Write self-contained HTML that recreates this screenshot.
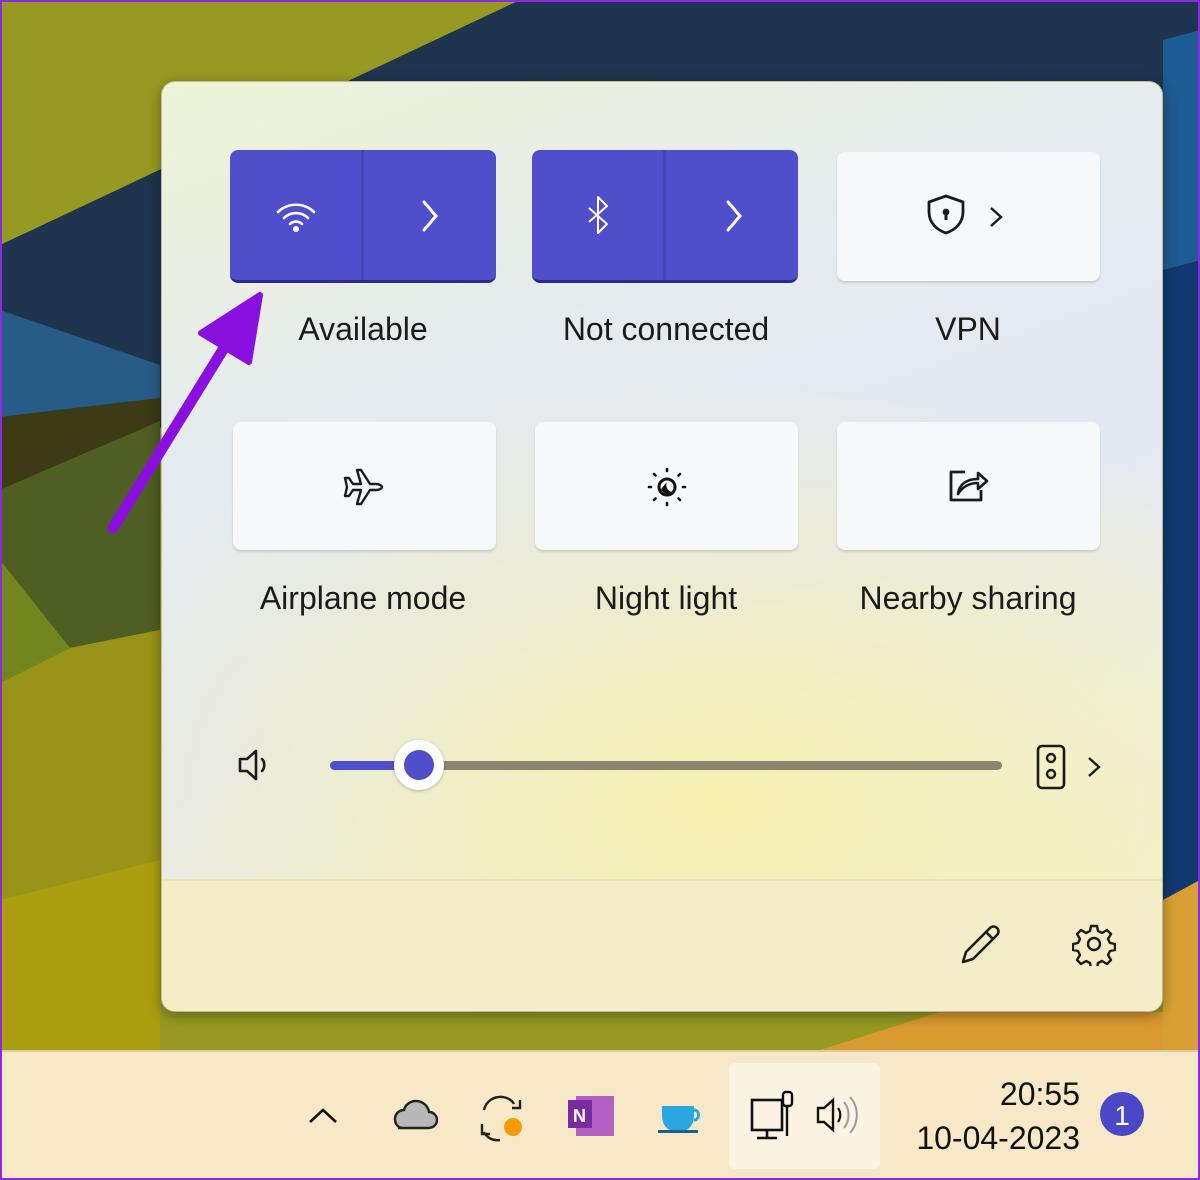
<!DOCTYPE html>
<html><head><meta charset="utf-8"><style>
*{margin:0;padding:0;box-sizing:border-box}
body{width:1200px;height:1180px;position:relative;overflow:hidden;font-family:"Liberation Sans",sans-serif;background:#979a22}
.abs{position:absolute}
.panel{left:161px;top:81px;width:1002px;height:931px;border-radius:14px;overflow:hidden;
background:radial-gradient(ellipse 700px 420px at 560px 720px,#f6f0b0 0%,rgba(246,240,176,0) 100%),linear-gradient(160deg,#edf3d6 0%,#e5ebee 30%,#e4e8f2 55%,#eef0e4 75%,#f6efc8 100%);
box-shadow:0 4px 14px rgba(0,0,0,.35);border:1px solid rgba(120,110,60,.4)}
.footer{left:0;top:797px;width:1002px;height:134px;background:#f5ecc8;border-top:2px solid #ece2bc}
.tile{border-radius:8px}
.blue{background:#4f4fcc;border-bottom:3px solid #2c2c8a}
.white{background:#f7f8fa;box-shadow:0 2px 2px rgba(0,0,0,.13)}
.lbl{font-size:32px;color:#1b1b1b;text-align:center;width:320px}
.sep{width:3px;background:#4545b8;top:0;bottom:0}
</style></head><body>
<svg class="abs" style="left:0;top:0" width="1200" height="1180">
<polygon points="0,245 520,0 1200,0 1200,90 0,480" fill="#1f344f"/>
<polygon points="0,310 160,365 160,398 0,417" fill="#275c86"/>
<polygon points="0,417 160,398 160,421 0,490" fill="#3c3b15"/>
<polygon points="0,490 160,421 160,630 70,648 0,683" fill="#4f5e22"/>
<polygon points="0,560 70,648 0,683" fill="#72851f"/>
<polygon points="0,683 70,648 160,630 160,1050 0,1050" fill="#999319"/>
<polygon points="0,900 160,860 160,1050 0,1050" fill="#ab9d10"/>
<polygon points="1163,40 1200,30 1200,260 1163,270" fill="#1f5b94"/>
<polygon points="1163,270 1200,260 1200,880 1163,900" fill="#123a70"/>
<polygon points="1163,900 1200,880 1200,1050 1163,1050" fill="#d8a034"/>
<polygon points="820,1050 940,1012 1163,1012 1163,1050" fill="#d99a30"/>
</svg>
<div class="abs panel">
<div class="abs footer"></div>
<div class="abs tile blue" style="left:68px;top:68px;width:266px;height:133px">
<div class="abs sep" style="left:131px"></div>
<svg class="abs" style="left:44px;top:48px" width="44" height="36" viewBox="0 0 44 36"><g fill="none" stroke="#fff" stroke-width="2.6" stroke-linecap="round"><path d="M4 14a26 26 0 0 1 36 0"/><path d="M10 20a17 17 0 0 1 24 0"/><path d="M16 26a8.5 8.5 0 0 1 12 0"/></g><circle cx="22" cy="31" r="3" fill="#fff"/></svg>
<svg class="abs" style="left:188px;top:48px" width="24" height="36"><path d="M6 4l12 14-12 14" fill="none" stroke="#fff" stroke-width="3" stroke-linecap="round"/></svg>
</div>
<div class="abs lbl" style="left:41px;top:229px">Available</div>
<div class="abs tile blue" style="left:370px;top:68px;width:266px;height:133px">
<div class="abs sep" style="left:131px"></div>
<svg class="abs" style="left:52px;top:44px" width="28" height="44"><path d="M5 14l18 16-9 9V3l9 9-18 16" fill="none" stroke="#fff" stroke-width="2" stroke-linejoin="round"/></svg>
<svg class="abs" style="left:190px;top:48px" width="24" height="36"><path d="M6 4l12 14-12 14" fill="none" stroke="#fff" stroke-width="3" stroke-linecap="round"/></svg>
</div>
<div class="abs lbl" style="left:344px;top:229px">Not connected</div>
<div class="abs tile white" style="left:675px;top:70px;width:263px;height:129px">
<svg class="abs" style="left:86px;top:40px" width="46" height="46"><path d="M23 4l17 6v10c0 11-8 18-17 21-9-3-17-10-17-21V10z" fill="none" stroke="#1b1b1b" stroke-width="2.8" stroke-linejoin="round"/><circle cx="23" cy="20" r="3.4" fill="#1b1b1b"/><rect x="21.5" y="20" width="3" height="8" fill="#1b1b1b"/></svg>
<svg class="abs" style="left:150px;top:52px" width="20" height="26"><path d="M4 4l10 9-10 9" fill="none" stroke="#1b1b1b" stroke-width="2.4"/></svg>
</div>
<div class="abs lbl" style="left:646px;top:229px">VPN</div>
<div class="abs tile white" style="left:71px;top:340px;width:263px;height:128px">
<svg class="abs" style="left:108px;top:42px" width="46" height="46" viewBox="0 0 46 46"><path d="M4 14h4l4 6h8l-4-14h4l9 14h6c4 0 6 2 6 3s-2 3-6 3h-6l-9 14h-4l4-14h-8l-4 6H4l2-9z" fill="none" stroke="#1b1b1b" stroke-width="2.4" stroke-linejoin="round"/></svg>
</div>
<div class="abs lbl" style="left:41px;top:498px">Airplane mode</div>
<div class="abs tile white" style="left:373px;top:340px;width:263px;height:128px">
<svg class="abs" style="left:110px;top:43px" width="44" height="44" viewBox="0 0 44 44"><circle cx="22" cy="22" r="8" fill="none" stroke="#111" stroke-width="3"/><path d="M16 24a7 7 0 0 0 11 3 7 7 0 0 1-5-10z" fill="#111"/><g stroke="#111" stroke-width="2.6" stroke-linecap="round"><path d="M22 4v2M22 38v2M4 22h2M38 22h2M9 9l1.5 1.5M33.5 33.5L35 35M9 35l1.5-1.5M33.5 10.5L35 9"/></g></svg>
</div>
<div class="abs lbl" style="left:344px;top:498px">Night light</div>
<div class="abs tile white" style="left:675px;top:340px;width:263px;height:128px">
<svg class="abs" style="left:108px;top:40px" width="48" height="48"><path d="M20 10H6v28h30v-10" fill="none" stroke="#1b1b1b" stroke-width="2.8" stroke-linejoin="round"/><path d="M13 32c1-10 9-15 20-15V11l9 8-9 8v-6c-8 0-15 3-20 11z" fill="none" stroke="#1b1b1b" stroke-width="2.6" stroke-linejoin="round"/></svg>
</div>
<div class="abs lbl" style="left:646px;top:498px">Nearby sharing</div>
<svg class="abs" style="left:74px;top:663px" width="40" height="40"><path d="M4 14h7l9-8v28l-9-8H4z" fill="none" stroke="#1b1b1b" stroke-width="2.6" stroke-linejoin="round"/><path d="M26 14c3 3 3 9 0 12" fill="none" stroke="#1b1b1b" stroke-width="2.6" stroke-linecap="round"/></svg>
<div class="abs" style="left:168px;top:679px;width:672px;height:9px;border-radius:5px;background:#8b8670"></div>
<div class="abs" style="left:168px;top:679px;width:90px;height:9px;border-radius:5px;background:#4f4fcc"></div>
<div class="abs" style="left:232px;top:658px;width:50px;height:50px;border-radius:50%;background:#fff;box-shadow:0 1px 3px rgba(0,0,0,.25)"></div>
<div class="abs" style="left:242px;top:668px;width:30px;height:30px;border-radius:50%;background:#4f4fcc"></div>
<svg class="abs" style="left:874px;top:662px" width="30" height="46"><rect x="2" y="2" width="26" height="42" rx="4" fill="none" stroke="#1b1b1b" stroke-width="2.6"/><circle cx="15" cy="14" r="4" fill="none" stroke="#1b1b1b" stroke-width="2.4"/><circle cx="15" cy="30" r="4" fill="none" stroke="#1b1b1b" stroke-width="2.4"/></svg>
<svg class="abs" style="left:923px;top:672px" width="20" height="26"><path d="M4 4l10 9-10 9" fill="none" stroke="#1b1b1b" stroke-width="2.4"/></svg>
<svg class="abs" style="left:795px;top:840px" width="46" height="46"><path d="M6 40l3-10L33 6c2-2 5-2 7 0s2 5 0 7L16 37z M29 10l7 7" fill="none" stroke="#1b1b1b" stroke-width="2.6" stroke-linejoin="round"/></svg>
<svg class="abs" style="left:910px;top:840px" width="44" height="44" viewBox="0 0 44 44"><path d="M19 4h6l1 5 4 2 5-3 4 4-3 5 2 4 5 1v6l-5 1-2 4 3 5-4 4-5-3-4 2-1 5h-6l-1-5-4-2-5 3-4-4 3-5-2-4-5-1v-6l5-1 2-4-3-5 4-4 5 3 4-2z" fill="none" stroke="#1b1b1b" stroke-width="2.4" stroke-linejoin="round"/><circle cx="22" cy="22" r="6" fill="none" stroke="#1b1b1b" stroke-width="2.4"/></svg>
</div>
<svg class="abs" style="left:0;top:0" width="400" height="600"><path d="M113 528L232 335" stroke="#8a10e0" stroke-width="11" stroke-linecap="round"/><polygon points="260,295 249,362 201,333" fill="#8a10e0" stroke="#8a10e0" stroke-width="6" stroke-linejoin="round"/></svg>
<div class="abs" style="left:0;top:1050px;width:1200px;height:130px;background:#f7e9c7;border-top:2px solid #d8cca0"></div>
<div class="abs" style="left:729px;top:1063px;width:151px;height:106px;border-radius:6px;background:#fbf4e2"></div>
<svg class="abs" style="left:0;top:1050px" width="1200" height="130">
<path d="M310 72l13-12 13 12" fill="none" stroke="#111" stroke-width="2.6"/>
<path d="M398 78h30c6 0 9-4 9-8s-3-8-8-8c-1-6-6-11-13-11-6 0-11 4-12 9-5 0-9 4-9 9s3 9 8 9z" fill="#b8b8b8" stroke="#222" stroke-width="2.4"/>
<path d="M484 60c2-9 10-14 19-13 5 1 9 3 11 7M520 50v8h-8M482 74v10h8M484 82c3 6 9 9 16 8" fill="none" stroke="#222" stroke-width="2.4"/>
<circle cx="513" cy="77" r="9" fill="#f59a0a"/>
<rect x="576" y="46" width="38" height="40" fill="#b25fc4"/><rect x="568" y="50" width="24" height="28" fill="#7b2ba0"/><text x="573" y="72" font-family="Liberation Sans" font-size="18" font-weight="bold" fill="#fff">N</text>
<path d="M662 56h32v10c0 10-7 16-16 16s-16-6-16-16z" fill="#2aa7e0"/><path d="M694 60c6 0 6 10 0 10" fill="none" stroke="#2aa7e0" stroke-width="3"/><rect x="658" y="80" width="40" height="3" fill="#1a5f90"/>
<rect x="752" y="50" width="30" height="30" fill="none" stroke="#111" stroke-width="2.6"/><path d="M767 80v8M757 88h20" stroke="#111" stroke-width="2.6"/><rect x="783" y="42" width="9" height="14" rx="3" fill="#fbf4e2" stroke="#111" stroke-width="2.4"/><path d="M787 56v30" stroke="#111" stroke-width="2.4"/>
<path d="M818 58h6l9-8v30l-9-8h-6z" fill="none" stroke="#111" stroke-width="2.4"/><path d="M838 58c3 4 3 10 0 14" fill="none" stroke="#111" stroke-width="2.2"/><path d="M844 52c6 7 6 19 0 26M850 47c9 10 9 26 0 36" fill="none" stroke="#999" stroke-width="2"/>
<circle cx="1122" cy="64" r="22" fill="#4a48c6"/><text x="1122" y="75" text-anchor="middle" font-family="Liberation Sans" font-size="28" fill="#fff">1</text>
</svg>
<div class="abs" style="left:880px;top:1072px;width:200px;text-align:right;font-size:32px;color:#111;line-height:44px">20:55<br>10-04-2023</div>
<div class="abs" style="left:0;top:0;width:1200px;height:1180px;border:2px solid #8a2be2"></div>
</body></html>
